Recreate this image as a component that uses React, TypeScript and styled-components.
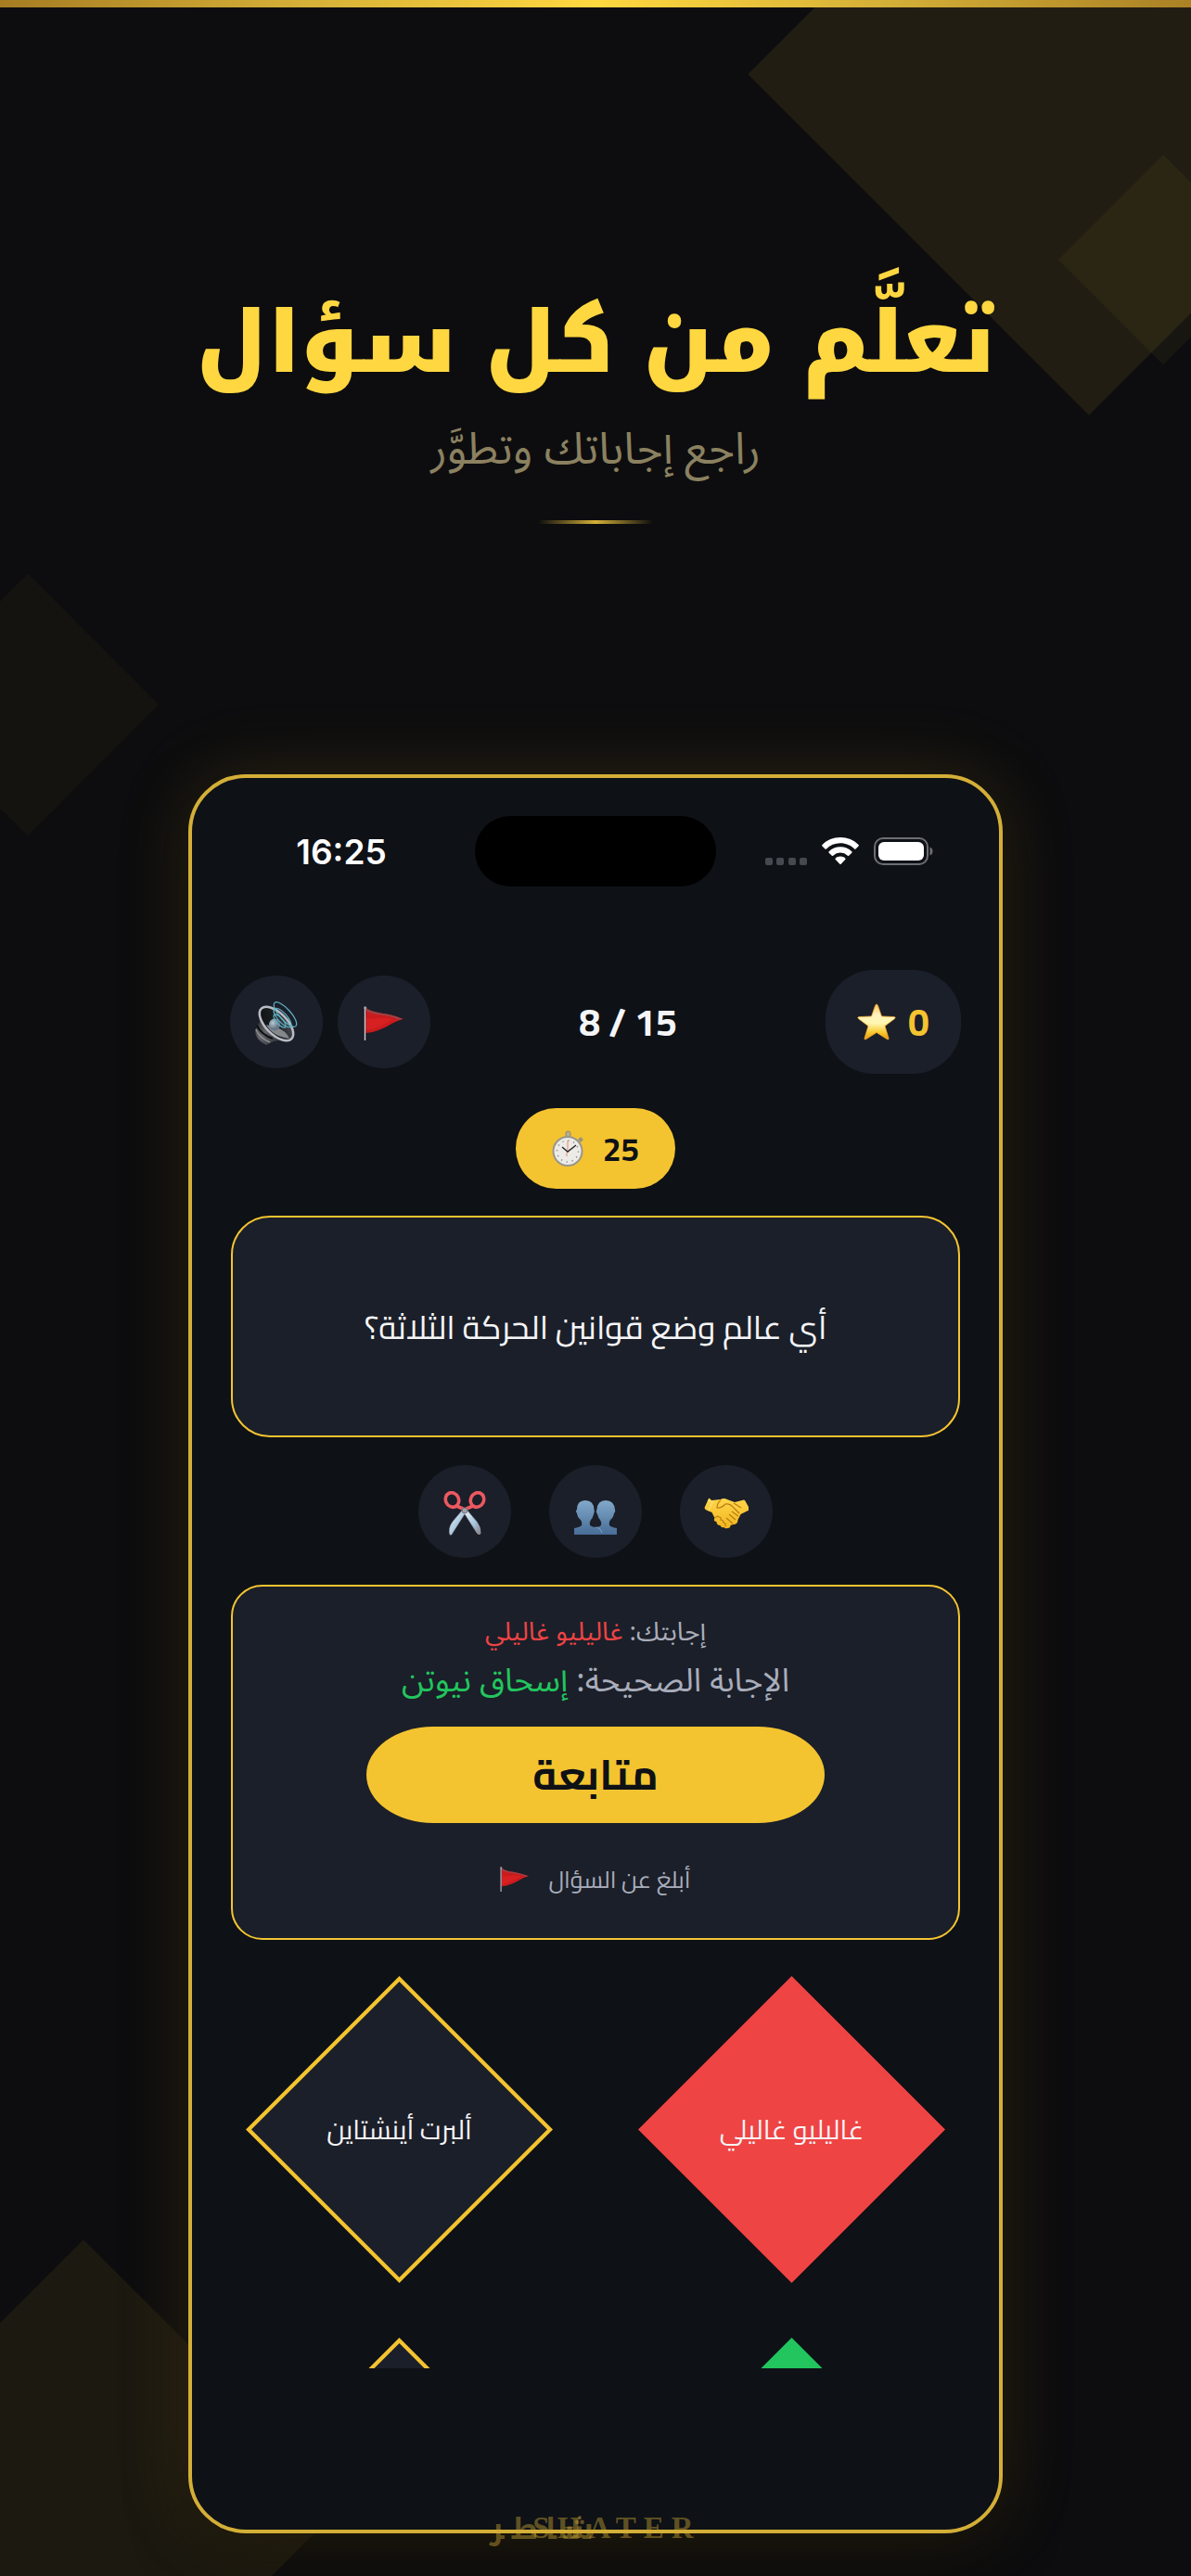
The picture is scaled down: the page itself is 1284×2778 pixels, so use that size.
import React from 'react';
import styled, { createGlobalStyle } from 'styled-components';

const gold = '#f4c430';
const panel = '#1b1f29';
const muted = '#a9adbb';
const cairo = `Cairo, 'Noto Kufi Arabic', 'Noto Sans', sans-serif`;
const kufi = `'Noto Kufi Arabic', 'DejaVu Sans', sans-serif`;
const sansArabic = `'Noto Sans Arabic', 'Noto Sans', sans-serif`;

const GlobalStyle = createGlobalStyle`
  *, *::before, *::after { box-sizing: border-box; }
  body { margin: 0; background: #0d0d0f; }
  button { border: 0; padding: 0; background: none; color: inherit; font: inherit; cursor: pointer; }
  svg { display: block; flex: none; }
  h1, p { margin: 0; }
`;

const Page = styled.main`
  position: relative;
  overflow: hidden;
  min-height: 100vh;
  background: #0d0d0f;
  display: flex;
  flex-direction: column;
  align-items: center;
  padding-bottom: 46px;
`;

const TopBar = styled.div`
  align-self: stretch;
  height: 8px;
  background: linear-gradient(90deg, #a67c22, #d4af37 25%, #ffd740 50%, #d4af37 75%, #a67c22);
`;

const BackDiamond = styled.span<{ $size: number; $alpha: number; $top?: number; $right?: number; $bottom?: number; $left?: number }>`
  position: absolute;
  width: ${p => p.$size}px;
  height: ${p => p.$size}px;
  top: ${p => (p.$top === undefined ? 'auto' : `${p.$top}px`)};
  right: ${p => (p.$right === undefined ? 'auto' : `${p.$right}px`)};
  bottom: ${p => (p.$bottom === undefined ? 'auto' : `${p.$bottom}px`)};
  left: ${p => (p.$left === undefined ? 'auto' : `${p.$left}px`)};
  background: rgba(212, 175, 55, ${p => p.$alpha});
  transform: rotate(45deg);
`;

const Hero = styled.header`
  position: relative;
  display: flex;
  flex-direction: column;
  align-items: center;
  padding-top: 284px;
  text-align: center;
`;

const Title = styled.h1`
  font: 900 92px/157px ${kufi};
  color: #ffd740;
`;

const Subtitle = styled.p`
  font: 400 48px/72px ${sansArabic};
  color: #8b8160;
`;

const Rule = styled.span`
  width: 124px;
  height: 4px;
  margin-top: 40px;
  background: linear-gradient(90deg, transparent, #d4af37, transparent);
`;

const Phone = styled.section`
  position: relative;
  width: calc(100% - 48px);
  max-width: 878px;
  margin-top: 270px;
  padding: 41px 41px 174px;
  border: 4px solid #d4af37;
  border-radius: 62px;
  background: #0e1116;
  box-shadow: 0 0 80px rgba(212, 165, 45, 0.17), 0 20px 60px rgba(0, 0, 0, 0.5);
  color: #f5f5f7;
`;

const StatusBar = styled.div`
  display: grid;
  grid-template-columns: 1fr 260px 1fr;
  align-items: center;
  height: 76px;
`;

const Clock = styled.time`
  justify-self: center;
  padding-top: 2px;
  padding-right: 24px;
  font: 600 37px/44px Inter, sans-serif;
  color: #fff;
`;

const Island = styled.span`
  height: 76px;
  border-radius: 38px;
  background: #000;
`;

const StatusIcons = styled.div`
  display: flex;
  align-items: center;
  justify-content: flex-end;
  gap: 16px;
  padding-right: 30px;
`;

const Toolbar = styled.div`
  display: flex;
  align-items: center;
  justify-content: space-between;
  margin-top: 90px;
`;

const Group = styled.div<{ $gap: number }>`
  display: flex;
  justify-content: center;
  gap: ${p => p.$gap}px;
`;

const RoundButton = styled.button`
  display: grid;
  place-items: center;
  width: 100px;
  height: 100px;
  padding-top: 4px;
  border-radius: 50%;
  background: ${panel};
`;

const Progress = styled.span`
  font: 700 41px/60px ${cairo};
`;

const Score = styled.div`
  display: flex;
  align-items: center;
  justify-content: center;
  gap: 13px;
  width: 146px;
  height: 112px;
  border-radius: 52px;
  background: ${panel};
  color: ${gold};
  font: 700 41px/60px ${cairo};
`;

const Timer = styled.div`
  display: flex;
  align-items: center;
  justify-content: center;
  gap: 20px;
  width: 172px;
  height: 87px;
  margin: 37px auto 0;
  border-radius: 44px;
  background: ${gold};
  color: #0e1116;
  font: 700 35px/52px ${cairo};
`;

const Card = styled.div`
  margin: 29px 1px;
  border: 2px solid ${gold};
  background: ${panel};
`;

const Question = styled(Card)`
  display: grid;
  place-items: center;
  min-height: 239px;
  margin-bottom: 30px;
  padding: 24px;
  border-radius: 42px;
  font: 400 35px/60px ${cairo};
  text-align: center;
`;

const Result = styled(Card)`
  display: flex;
  flex-direction: column;
  align-items: center;
  margin-bottom: 39px;
  padding: 26px 24px 35px;
  border-radius: 34px;
  color: ${muted};
`;

const Given = styled.p`
  font: 400 28px/48px ${sansArabic};
`;

const Correct = styled.p`
  font: 400 35px/56px ${sansArabic};
`;

const Mark = styled.span<{ $color: string }>`
  color: ${p => p.$color};
`;

const Continue = styled.button`
  width: 494px;
  max-width: 100%;
  height: 104px;
  margin: 21px 0 33px;
  border-radius: 72px / 52px;
  background: ${gold};
  color: #0e1116;
  font: 700 45px/80px ${cairo};
`;

const Report = styled.button`
  display: flex;
  align-items: center;
  gap: 20px;
  font: 400 25px/56px ${cairo};
`;

const Answers = styled.div`
  display: grid;
  grid-template-columns: repeat(2, 331px);
  justify-content: center;
  gap: 59px 92px;
  height: 423px;
  overflow: hidden;
`;

const Answer = styled.button<{ $edge: string; $fill: string }>`
  height: 331px;
  padding: 6px;
  background: ${p => p.$edge};
  clip-path: polygon(50% 0, 100% 50%, 50% 100%, 0 50%);
  color: #f5f5f7;

  span {
    display: grid;
    place-items: center;
    height: 100%;
    background: ${p => p.$fill};
    clip-path: polygon(50% 0, 100% 50%, 50% 100%, 0 50%);
    font: 400 29px/44px ${cairo};
  }
`;

const Brand = styled.footer`
  position: absolute;
  left: 0;
  right: 0;
  bottom: 22px;
  display: grid;
  justify-content: center;
  color: rgba(212, 175, 55, 0.42);
  white-space: nowrap;
`;

const BrandArabic = styled.span`
  grid-area: 1 / 1;
  justify-self: start;
  display: flex;
  gap: 8px;
  font: 700 32px/56px ${kufi};
`;

const BrandLatin = styled.span`
  grid-area: 1 / 1;
  margin-left: 46px;
  font: 700 33px/52px 'Liberation Serif', serif;
  letter-spacing: 8px;
`;

const Signal = () => (
  <svg width="45" height="30" viewBox="0 0 45 30" fill="#46494f">
    {[0, 12, 25, 37].map(x => <rect key={x} x={x} y="22" width="8" height="8" rx="2" />)}
  </svg>
);

const Wifi = () => (
  <svg width="40" height="30" viewBox="0 0 40 30" fill="#fff">
    <path d="M20 0C12.400 0 5.500 3 .5 7.900a1 1 0 0 0 0 1.500l3 3a1 1 0 0 0 1.400 0A21.500 21.500 0 0 1 20 6.300c5.900 0 11.200 2.300 15.100 6.100a1 1 0 0 0 1.400 0l3-3a1 1 0 0 0 0-1.500C34.500 3 27.600 0 20 0Z" />
    <path d="M20 10.300c-4.800 0-9.100 1.900-12.300 4.900a1 1 0 0 0 0 1.500l3.100 3a1 1 0 0 0 1.400 0 11.400 11.400 0 0 1 15.600 0 1 1 0 0 0 1.400 0l3.100-3a1 1 0 0 0 0-1.500A17.700 17.700 0 0 0 20 10.300Z" />
    <path d="M20 20.500c-2 0-3.800.7-5.200 1.900a1 1 0 0 0 0 1.500l4.500 4.900a1 1 0 0 0 1.400 0l4.500-4.900a1 1 0 0 0 0-1.500c-1.400-1.200-3.200-1.900-5.200-1.900Z" />
  </svg>
);

const Battery = () => (
  <svg width="64" height="30" viewBox="0 0 64 30">
    <rect x="1" y="1" width="57" height="28" rx="9" fill="none" stroke="#6c6e73" strokeWidth="2" />
    <rect x="5" y="5" width="49" height="20" rx="6" fill="#fff" />
    <path d="M60.500 10.500q3 1 3 4.500t-3 4.500Z" fill="#6c6e73" />
  </svg>
);

const Speaker = () => (
  <svg width="48" height="48" viewBox="0 0 48 48">
    <defs>
      <linearGradient id="sp-body" x1="0" y1="0" x2="1" y2="1">
        <stop offset="0" stopColor="#14161a" /><stop offset=".45" stopColor="#62656a" /><stop offset="1" stopColor="#17191c" />
      </linearGradient>
      <linearGradient id="sp-cone" x1="0" y1="0" x2="1" y2="1">
        <stop offset="0" stopColor="#0c0e11" /><stop offset=".5" stopColor="#1c1f22" /><stop offset="1" stopColor="#5b5e61" />
      </linearGradient>
      <radialGradient id="sp-dome" cx=".35" cy=".35"><stop offset="0" stopColor="#b8c9d6" /><stop offset="1" stopColor="#667686" /></radialGradient>
    </defs>
    <path d="M6 22 1 31q0 10 12 16l8-4 16-2L9 13Z" fill="url(#sp-body)" />
    <path d="M2 30q3 9 15 14" fill="none" stroke="#8c9094" strokeWidth="1.500" />
    <path d="M3 26q5 10 17 14" fill="none" stroke="#0d0e10" strokeWidth="2" />
    <ellipse cx="24" cy="24" rx="11.500" ry="23" transform="rotate(-45 24 24)" fill="url(#sp-cone)" stroke="#b9bcc5" strokeWidth="2.500" />
    <path d="M13 25Q20 38 38 40q-4-9-14-12Z" fill="#85888b" />
    <ellipse cx="22" cy="25" rx="6" ry="6.500" fill="url(#sp-dome)" />
    <g fill="none" stroke="#5fb4c7" strokeWidth="1.200">
      <ellipse cx="27.500" cy="21" rx="3.500" ry="9" transform="rotate(-42 27.500 21)" />
      <ellipse cx="30.500" cy="17.500" rx="5" ry="13" transform="rotate(-42 30.500 17.500)" />
      <ellipse cx="33.500" cy="14" rx="6" ry="17" transform="rotate(-42 33.500 14)" />
    </g>
  </svg>
);

const Flag = ({ size }: { size: number }) => (
  <svg width={size} height={size} viewBox="0 0 44 38">
    <path d="M2.500 2C12 9 25 6 42.500 14 32 16 20 28 2.500 29Z" fill="#ca1b1d" />
    <path d="M2.500 2C12 9 25 6 42.500 14l-5 .5C24 8 12 11 2.500 5Z" fill="#9c4246" />
    <path d="M2.500 12C12 17 17 10 31 14 23 20 12 25 2.500 26Z" fill="#df2524" opacity=".6" />
    <path d="M1.500 2v35" stroke="#d8cdd3" strokeWidth="1.400" />
    <circle cx="1.700" cy="1.700" r="1.500" fill="#aaa1a6" />
  </svg>
);

const Star = () => (
  <svg width="42" height="40" viewBox="0 0 42 40">
    <defs><linearGradient id="star" x1="0" y1="0" x2="0" y2="1">
      <stop offset="0" stopColor="#ffc45c" /><stop offset=".3" stopColor="#fff3bf" /><stop offset=".55" stopColor="#fff6ae" /><stop offset=".8" stopColor="#f9c92d" /><stop offset="1" stopColor="#e39a14" />
    </linearGradient></defs>
    <path d="M21 1q1 0 1.600 1.900L26.500 14l13 .5q3 .4.8 2.300L30 24.500l4 13.200q.4 2-1.600 1L21 31.500 9.600 38.700q-2 1-1.600-1l4-13.200L1.700 16.800q-2.200-1.900.8-2.300l13-.5L19.400 2.900Q20 1 21 1Z" fill="url(#star)" stroke="#efa52f" strokeWidth=".8" />
  </svg>
);

const Stopwatch = () => (
  <svg width="35" height="39" viewBox="0 0 35 39">
    <rect x="15" y="1" width="5" height="7" rx="2" fill="#b6ad96" stroke="#857c68" strokeWidth=".8" />
    <path d="m28 10 3-3 3 3-3 3Z" fill="#9a927e" />
    <circle cx="17" cy="22.500" r="15.500" fill="#ecebe8" stroke="#9a968c" strokeWidth="2" />
    <circle cx="17" cy="22.500" r="11.500" fill="none" stroke="#8b8b8b" strokeWidth="1.600" strokeDasharray="1.200 4.822" />
    <path d="M17 24V11M16 24v4" stroke="#e4895f" strokeWidth="1" />
    <path d="m11 18 6 5 9-7" fill="none" stroke="#242424" strokeWidth="1.400" />
  </svg>
);

const Scissors = () => (
  <svg width="46" height="48" viewBox="0 0 46 48">
    <defs><linearGradient id="blade" x1="0" y1="0" x2="1" y2="1"><stop offset="0" stopColor="#eff6fc" /><stop offset=".6" stopColor="#a3c4de" /><stop offset="1" stopColor="#887b80" /></linearGradient></defs>
    <path d="M21 20 10 33Q5 40 7 47q2 1 3-2l14-22Z" fill="url(#blade)" stroke="#a7a1a9" strokeWidth=".6" />
    <path d="m25 20 11 13q5 7 4 13-2 2-4-1L22 23Z" fill="url(#blade)" stroke="#a7a1a9" strokeWidth=".6" />
    <g fill="none" stroke="#ec5960" strokeWidth="3.600">
      <ellipse cx="9.500" cy="9.500" rx="7" ry="8" transform="rotate(-25 9.500 9.500)" />
      <ellipse cx="36.500" cy="9.500" rx="7" ry="8" transform="rotate(25 36.500 9.500)" />
      <path d="m14 16 7 3M32 16l-7 3" strokeLinecap="round" />
    </g>
    <circle cx="23" cy="21" r="3" fill="#9ea0aa" stroke="#635e68" strokeWidth=".7" />
  </svg>
);

const People = () => (
  <svg width="46" height="48" viewBox="0 0 46 48">
    <defs><linearGradient id="people" x1="0" y1="9" x2="0" y2="48" gradientUnits="userSpaceOnUse"><stop offset="0" stopColor="#83abcb" /><stop offset="1" stopColor="#466b96" /></linearGradient></defs>
    <path d="M0 47v-7q6-1 8-3 1-4-2-7-2-1-3-6Q1 21 3 20 3 10 12 10t9.500 10q1 2-.5 5-1 4-3 6-2 3-1 6 3 2 6 2 4 0 6-2 1-3-1-6-2-2-3-6-2-3-.5-5Q25 10 34 10t10 10q1 2-1 4-1 5-3 6-3 3-2 7 2 2 8 3v7Z" fill="url(#people)" />
    <path d="M23 39q5 0 7 6" fill="none" stroke="#7598b8" strokeWidth="1.200" />
  </svg>
);

const Handshake = () => (
  <svg width="48" height="34" viewBox="0 0 48 34">
    <defs><linearGradient id="hand" x1="0" y1="0" x2="0" y2="1"><stop offset="0" stopColor="#ffd64d" /><stop offset="1" stopColor="#f2b51d" /></linearGradient></defs>
    <path d="M5 1 .5 11q0 2 3 3l5 2 3 6q-2 4 2 4 0 4 4 4 1 3 4 2 1 2 4 1 3 0 3-3l3-1q5 0 5-5l3-6 8-4q2-1 1-3L44 3q-1-1-3 0l-8 2-8-3q-4-2-7 0L8 3 6 .8Z" fill="url(#hand)" />
    <path d="M18 3q-4 3-4 8 4 1 9-4 5-1 9 4l6 6M30 15l7 5M27 18l7 6M24 22l7 6M12 22q2-3 4-1 3 0 2 3 3 0 3 3 3 1 2 4M32 6l8 5" fill="none" stroke="#b97c13" strokeWidth="1.200" />
    <path d="m4 3 5 2-4 9" fill="none" stroke="#ffe47c" strokeWidth="1.200" />
  </svg>
);

/* The joiners keep each letter in its connected form while the word is set wide. */
const brandLetters = ['ش\u200d', '\u200dا', 'ط\u200d', '\u200dر'];

export default function App() {
  return (
    <Page>
      <GlobalStyle />
      <TopBar />
      <BackDiamond $size={520} $alpha={0.1} $top={-180} $right={-150} />
      <BackDiamond $size={160} $alpha={0.06} $top={200} $right={-50} />
      <BackDiamond $size={200} $alpha={0.04} $top={660} $left={-70} />
      <BackDiamond $size={400} $alpha={0.08} $bottom={-120} $left={-110} />

      <Hero dir="rtl">
        <Title>تعلَّم من كل سؤال</Title>
        <Subtitle>راجع إجاباتك وتطوَّر</Subtitle>
        <Rule />
      </Hero>

      <Phone>
        <StatusBar>
          <Clock>16:25</Clock>
          <Island />
          <StatusIcons><Signal /><Wifi /><Battery /></StatusIcons>
        </StatusBar>

        <Toolbar>
          <Group $gap={16}>
            <RoundButton aria-label="الصوت"><Speaker /></RoundButton>
            <RoundButton aria-label="إبلاغ"><Flag size={44} /></RoundButton>
          </Group>
          <Progress>8 / 15</Progress>
          <Score><Star />0</Score>
        </Toolbar>

        <Timer><Stopwatch />25</Timer>

        <Question dir="rtl">أي عالم وضع قوانين الحركة الثلاثة؟</Question>

        <Group $gap={41}>
          <RoundButton aria-label="حذف إجابتين"><Scissors /></RoundButton>
          <RoundButton aria-label="رأي الجمهور"><People /></RoundButton>
          <RoundButton aria-label="مساعدة صديق"><Handshake /></RoundButton>
        </Group>

        <Result dir="rtl">
          <Given>إجابتك: <Mark $color="#ef4444">غاليليو غاليلي</Mark></Given>
          <Correct>الإجابة الصحيحة: <Mark $color="#22c55e">إسحاق نيوتن</Mark></Correct>
          <Continue>متابعة</Continue>
          <Report>أبلغ عن السؤال<Flag size={32} /></Report>
        </Result>

        <Answers>
          <Answer $edge={gold} $fill={panel}><span dir="rtl">ألبرت أينشتاين</span></Answer>
          <Answer $edge="#ef4444" $fill="#ef4444"><span dir="rtl">غاليليو غاليلي</span></Answer>
          <Answer $edge={gold} $fill={panel} aria-label="الإجابة الثالثة"><span /></Answer>
          <Answer $edge="#22c55e" $fill="#22c55e" aria-label="إسحاق نيوتن"><span /></Answer>
        </Answers>
      </Phone>

      <Brand>
        <BrandArabic dir="rtl">{brandLetters.map(l => <span key={l}>{l}</span>)}</BrandArabic>
        <BrandLatin>SHATER</BrandLatin>
      </Brand>
    </Page>
  );
}
